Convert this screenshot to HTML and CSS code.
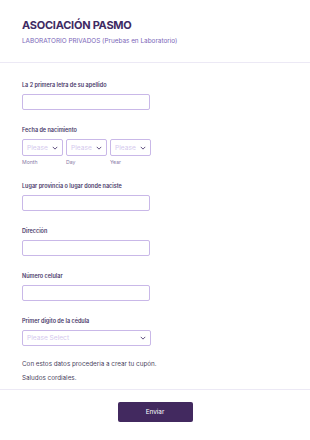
FILE: index.html
```html
<!DOCTYPE html>
<html lang="es">
<head>
    <meta charset="UTF-8">
    <title>Asociación Pasmo</title>
    <link rel="stylesheet" href="styles.css">
</head>
<body>
    <div class="header">
        <h1>ASOCIACIÓN PASMO</h1>
        <p class="subtitle">LABORATORIO PRIVADOS (Pruebas en Laboratorio)</p>
    </div>

    <form class="form">
        <div class="form-group">
            <label>La 2 primera letra de su apellido</label>
            <input type="text">
        </div>

        <div class="form-group">
            <label>Fecha de nacimiento</label>
            <div class="date-row">
                <div class="date-col">
                    <div class="select small"><span>Please</span><svg class="chev" viewBox="0 0 8 5"><polyline points="1,1 4,4 7,1"/></svg></div>
                    <small>Month</small>
                </div>
                <div class="date-col">
                    <div class="select small"><span>Please</span><svg class="chev" viewBox="0 0 8 5"><polyline points="1,1 4,4 7,1"/></svg></div>
                    <small>Day</small>
                </div>
                <div class="date-col">
                    <div class="select small"><span>Please</span><svg class="chev" viewBox="0 0 8 5"><polyline points="1,1 4,4 7,1"/></svg></div>
                    <small>Year</small>
                </div>
            </div>
        </div>

        <div class="form-group">
            <label>Lugar provincia o lugar donde naciste</label>
            <input type="text">
        </div>

        <div class="form-group">
            <label>Dirección</label>
            <input type="text">
        </div>

        <div class="form-group">
            <label>Número celular</label>
            <input type="text">
        </div>

        <div class="form-group">
            <label>Primer digito de la cédula</label>
            <div class="select wide"><span>Please Select</span><svg class="chev" viewBox="0 0 8 5"><polyline points="1,1 4,4 7,1"/></svg></div>
        </div>

        <p class="note">Con estos datos procederia a crear tu cupón.</p>
        <p class="note">Saludos cordiales.</p>
    </form>

    <div class="footer">
        <button type="button">Enviar</button>
    </div>
</body>
</html>
```

FILE: styles.css
```css
:root {
    --title-color: #3e2a63;
    --sub-color: #7a66b8;
    --label-color: #4a3a6a;
    --border-color: #c9b8e8;
    --placeholder: #d4c9ee;
    --line: #ece9f5;
    --button: #42295f;
}
body {
    margin: 0;
    font-family: Inter, "Noto Sans", sans-serif;
    background: white;
    color: var(--label-color);
}
.header {
    padding: 18px 22px 16px;
    border-bottom: 1px solid var(--line);
}
h1 {
    margin: 0;
    font-size: 11px;
    line-height: 15px;
    font-weight: 700;
    color: var(--title-color);
    letter-spacing: -0.25px;
}
.subtitle {
    margin: 4px 0 0;
    font-size: 6.4px;
    line-height: 9px;
    color: var(--sub-color);
}
.form {
    padding: 17px 22px 0;
}
.form-group {
    margin-bottom: 15px;
}
label {
    display: block;
    font-size: 5.5px;
    line-height: 10px;
    font-weight: 600;
    margin-bottom: 4px;
}
input {
    display: block;
    width: 128px;
    height: 16px;
    box-sizing: border-box;
    margin: 0;
    border: 1px solid var(--border-color);
    border-radius: 2px;
    background: white;
}
.date-row {
    display: flex;
    gap: 3px;
}
.date-col small {
    display: block;
    margin-top: 3px;
    font-size: 5.2px;
    line-height: 7px;
    color: #8a7ca8;
}
.select {
    display: flex;
    align-items: center;
    justify-content: space-between;
    box-sizing: border-box;
    height: 17px;
    padding: 0 4px;
    border: 1px solid var(--border-color);
    border-radius: 2px;
    font-size: 6.6px;
    color: var(--placeholder);
}
.select.small {
    width: 41px;
}
.select.wide {
    width: 129px;
    height: 16px;
}
.chev {
    width: 6px;
    height: 4px;
    fill: none;
    stroke: #5a4a7c;
    stroke-width: 1.3;
}
.note {
    margin: 0 0 7px;
    font-size: 6.3px;
    line-height: 7px;
    color: #4a3f5e;
}
.footer {
    margin-top: 7px;
    border-top: 1px solid var(--line);
    display: flex;
    justify-content: center;
    padding-top: 12px;
}
button {
    width: 75px;
    height: 20px;
    border: none;
    border-radius: 2px;
    background: var(--button);
    color: white;
    font-family: Inter, "Noto Sans", sans-serif;
    font-size: 6.4px;
    cursor: pointer;
}
```
